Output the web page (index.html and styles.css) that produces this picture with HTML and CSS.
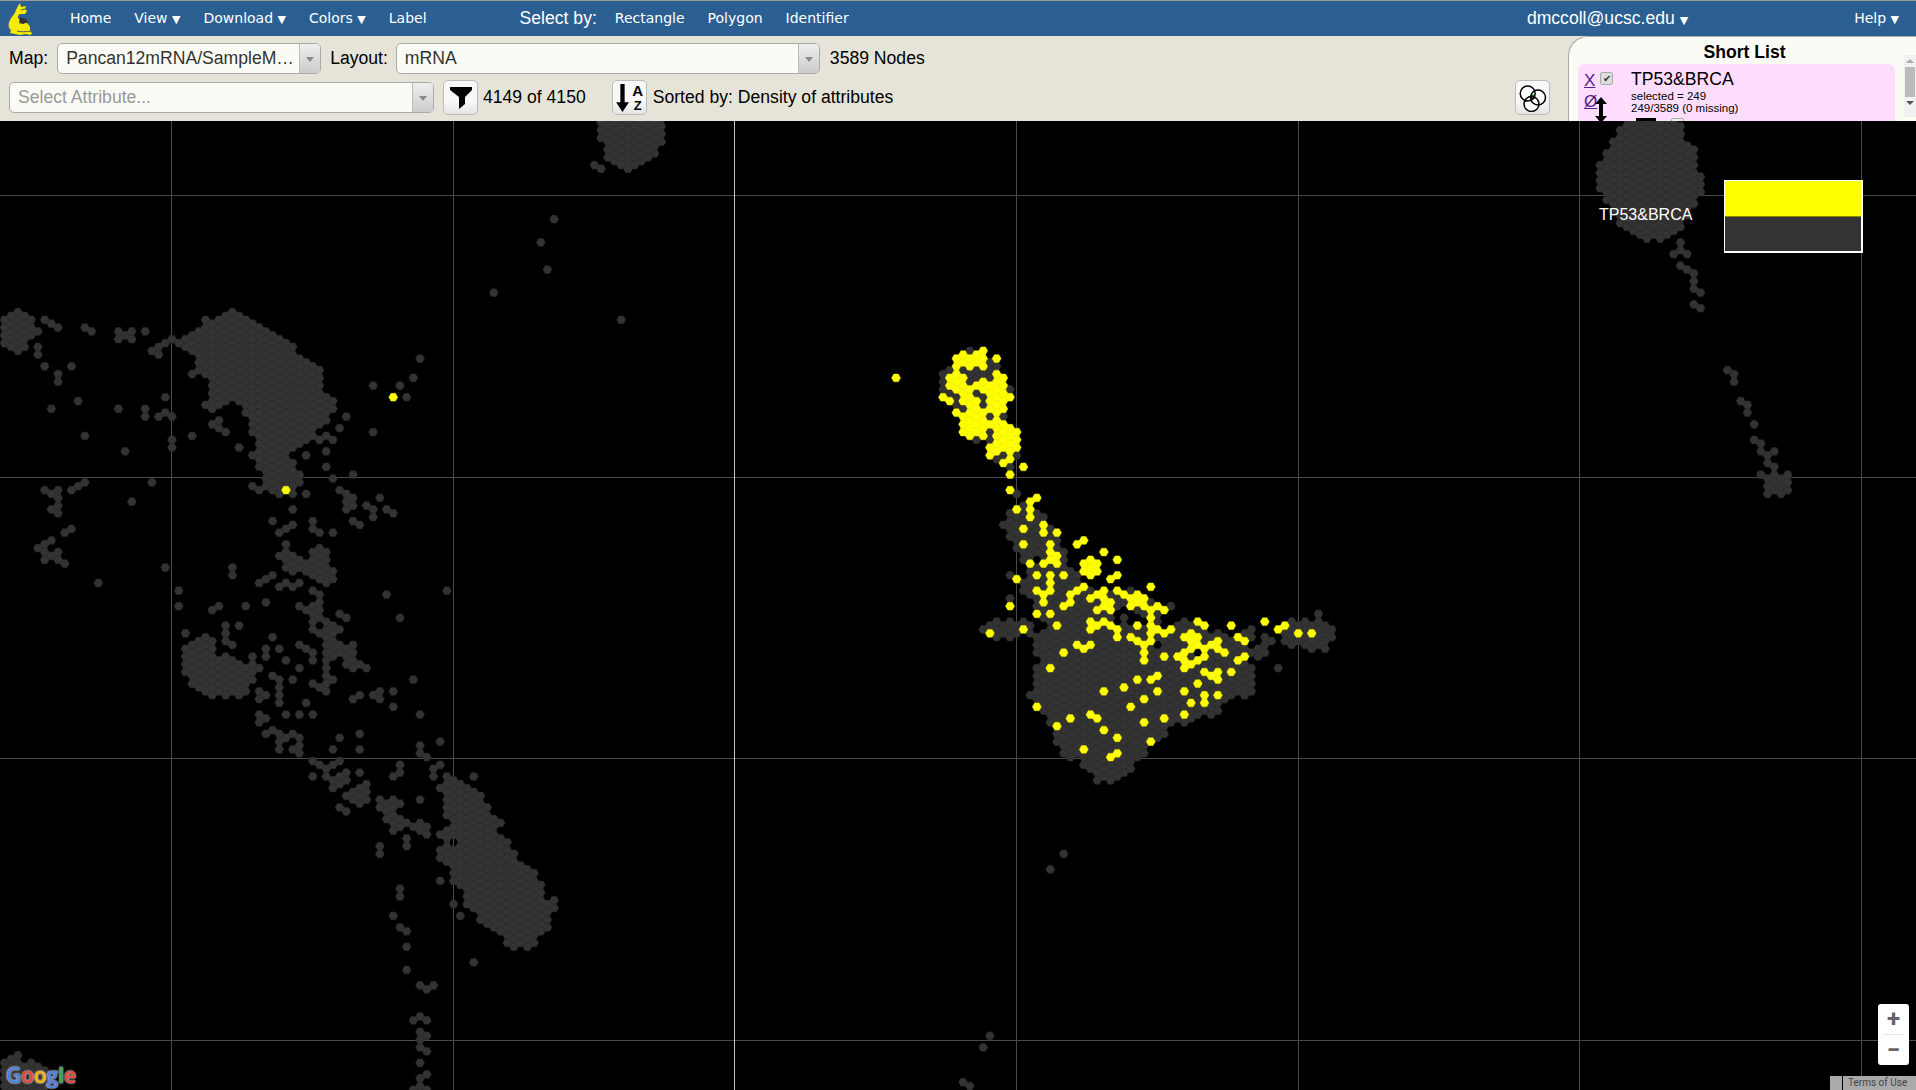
FILE: index.html
```html
<!DOCTYPE html>
<html lang="en">
<head>
  <meta charset="UTF-8">
  <title>Tumor Map</title>
  <link rel="stylesheet" href="styles.css">
</head>
<body>
  <header class="nav">
    <svg class="logo" viewBox="0 0 28 34" width="28" height="34">
      <path d="M12 1l1 4 5-1-1 3 2 2-2 3-5 0c-2 1-3 3-1 5l5 3c4 1 7 4 6 8l2 4-2 1-4-1-6 1-5-1-5-1 1-3c-3-2-3-6-1-10 2-4 5-6 6-10l2-4z" fill="#f5ea00"/>
      <path d="M12 15l6 2 2 3-5 2-4-1z" fill="#333"/>
      <path d="M13 8l4-1M9 29c4 1 9 1 14 0" stroke="#555" stroke-width="1" fill="none"/>
    </svg>
    <a class="nav-item first">Home</a>
    <a class="nav-item">View <i>▼</i></a>
    <a class="nav-item">Download <i>▼</i></a>
    <a class="nav-item">Colors <i>▼</i></a>
    <a class="nav-item">Label</a>
    <span class="select-by">Select by:</span>
    <a class="nav-item">Rectangle</a>
    <a class="nav-item">Polygon</a>
    <a class="nav-item">Identifier</a>
    <span class="user">dmccoll@ucsc.edu <i>▼</i></span>
    <a class="nav-item help">Help <i>▼</i></a>
  </header>

  <section class="toolbar">
    <div class="controls">
      <div class="row">
        <span class="label">Map:</span>
        <div class="combo map-combo"><span class="combo-text">Pancan12mRNA/SampleM…</span><span class="combo-arrow"></span></div>
        <span class="label">Layout:</span>
        <div class="combo layout-combo"><span class="combo-text">mRNA</span><span class="combo-arrow"></span></div>
        <span class="label">3589 Nodes</span>
      </div>
      <div class="row row-two">
        <div class="combo attr-combo"><span class="combo-text placeholder">Select Attribute...</span><span class="combo-arrow"></span></div>
        <button class="icon-button">
          <svg viewBox="0 0 24 24" width="24" height="24"><path d="M1 1h22v3l-7 7v7l-6 5V11L1 4z" fill="#000"/></svg>
        </button>
        <span class="label count">4149 of 4150</span>
        <button class="icon-button sort-button">
          <svg viewBox="0 0 14 28" width="15" height="30"><path d="M5 1h4v17h4l-6 9-6-9h4z" fill="#000"/></svg>
          <span class="az"><b>A</b><b class="az-small">Z</b></span>
        </button>
        <span class="label sorted">Sorted by: Density of attributes</span>
        <button class="icon-button venn-button">
          <svg viewBox="0 0 28 28" width="28" height="28">
            <g fill="#fff">
              <circle cx="8.7" cy="9.5" r="7.5"/>
              <circle cx="19" cy="13.5" r="7.5"/>
              <circle cx="12.5" cy="20" r="7.5"/>
            </g>
            <circle cx="13.5" cy="13" r="2.6" fill="#0a7a0a"/>
            <g fill="none" stroke="#000" stroke-width="1.5">
              <circle cx="8.7" cy="9.5" r="7.5"/>
              <circle cx="19" cy="13.5" r="7.5"/>
              <circle cx="12.5" cy="20" r="7.5"/>
            </g>
          </svg>
        </button>
      </div>
    </div>
    <aside class="short-list">
      <h2>Short List</h2>
      <div class="card">
        <div class="card-tools">
          <a class="card-link">X</a><span class="check">✔</span>
          <a class="card-link">Ø</a>
          <svg class="move" viewBox="0 0 14 26" width="14" height="26"><path d="M7 0l6 7H9v12h4l-6 7-6-7h4V7H1z" fill="#000"/></svg>
        </div>
        <div class="card-info">
          <div class="card-name">TP53&amp;BRCA</div>
          <div class="card-stat">selected = 249</div>
          <div class="card-stat">249/3589 (0 missing)</div>
          <div class="card-more"><span class="more-bar"></span><span class="more-box"></span></div>
        </div>
      </div>
      <div class="scrollbar"><span class="up"></span><span class="thumb"></span><span class="down"></span></div>
    </aside>
  </section>

  <main class="map">
    <svg id="hexes" class="hexes" viewBox="0 121 1916 969"></svg>
    <div class="legend-label">TP53&amp;BRCA</div>
    <div class="legend"><div class="legend-on"></div><div class="legend-off"></div></div>
    <div class="google"><span class="g-blue">G</span><span class="g-red">o</span><span class="g-yellow">o</span><span class="g-blue">g</span><span class="g-green">l</span><span class="g-red">e</span></div>
    <div class="zoom"><span class="zoom-btn">+</span><span class="zoom-sep"></span><span class="zoom-btn">−</span></div>
    <div class="terms"><span class="terms-box"></span><span class="terms-text">Terms of Use</span></div>
  </main>

  <script src="app.js"></script>
</body>
</html>
```

FILE: styles.css
```css
html, body {
  margin: 0;
  padding: 0;
  height: 100%;
  overflow: hidden;
}

body {
  display: flex;
  flex-direction: column;
  font-family: "Liberation Sans", Arial, sans-serif;
  font-size: 17.6px;
  color: #000;
  background: #000;
}

.nav {
  display: flex;
  align-items: center;
  flex: 0 0 35px;
  border-top: 1px solid #999;
  background: #2c5f91;
  color: #fff;
  padding-left: 8px;
}

.logo {
  flex: none;
}

.nav-item {
  font-family: "DejaVu Sans", sans-serif;
  font-size: 14px;
  margin-right: 23px;
  white-space: nowrap;
  position: relative;
  top: -1px;
}

.nav-item i, .user i {
  font-style: normal;
  font-size: 11px;
  font-family: "DejaVu Sans", sans-serif;
}

.first {
  margin-left: 34px;
}

.select-by {
  margin-left: 70px;
  margin-right: 18px;
  white-space: nowrap;
}

.user {
  margin-left: auto;
  white-space: nowrap;
}

.help {
  margin-left: 166px;
  margin-right: 17px;
}

.toolbar {
  display: flex;
  flex: 0 0 85px;
  background: #e6e4d8;
  overflow: hidden;
}

.controls {
  flex: 1;
  min-width: 0;
  padding: 7px 18px 0 9px;
}

.row {
  display: flex;
  align-items: center;
  height: 31px;
}

.row-two {
  height: 35px;
  margin-top: 6px;
}

.label {
  white-space: nowrap;
}

.combo {
  display: flex;
  height: 31px;
  box-sizing: border-box;
  border: 1px solid #aaa;
  border-radius: 5px;
  background: #fbfbf5;
  overflow: hidden;
}

.combo-text {
  flex: 1;
  padding-left: 8px;
  line-height: 29px;
  color: #333;
  white-space: nowrap;
  overflow: hidden;
}

.placeholder {
  color: #999;
}

.combo-arrow {
  flex: 0 0 20px;
  border-left: 1px solid #bbb;
  background: linear-gradient(#eee, #ccc);
  position: relative;
}

.combo-arrow::after {
  content: "";
  position: absolute;
  left: 6px;
  top: 13px;
  border: 4px solid transparent;
  border-top: 5px solid #888;
}

.map-combo {
  width: 264px;
  margin: 0 9px;
}

.layout-combo {
  width: 424px;
  margin: 0 10px 0 8px;
}

.attr-combo {
  width: 425px;
}

.icon-button {
  display: flex;
  align-items: center;
  justify-content: center;
  flex: none;
  width: 35px;
  height: 35px;
  padding: 0;
  border: 1px solid #bbb;
  border-radius: 5px;
  background: linear-gradient(#f8f8f8 60%, #e4e4e4);
}

.attr-combo + .icon-button {
  margin-left: 9px;
}

.count {
  margin-left: 5px;
}

.sort-button {
  margin-left: 26px;
  gap: 2px;
  font-family: "Liberation Sans", sans-serif;
  color: #000;
}

.az {
  display: flex;
  flex-direction: column;
  align-items: center;
  font-size: 15px;
  line-height: 15px;
}

.az-small {
  font-size: 13px;
}

.sorted {
  margin-left: 6px;
}

.venn-button {
  margin-left: auto;
}

.short-list {
  position: relative;
  flex: 0 0 348px;
  min-width: 0;
  box-sizing: border-box;
  border: 1px solid #aaa;
  border-right: 0;
  border-radius: 20px 0 0 20px;
  background: #fbfbf5;
  height: 110px;
}

.short-list h2 {
  margin: 0;
  padding: 5px 0 0 0;
  width: 351px;
  text-align: center;
  font-size: 17.6px;
  line-height: 20px;
}

.card {
  display: flex;
  margin: 2px 0 0 9px;
  width: 317px;
  height: 76px;
  border-radius: 7px;
  background: #fdf;
}

.card-tools {
  position: relative;
  flex: 0 0 53px;
}

.card-link {
  position: absolute;
  left: 6px;
  top: 7px;
  color: #551a8b;
  text-decoration: underline;
  font-size: 17px;
}

.card-link:nth-of-type(2) {
  top: 28px;
}

.check {
  position: absolute;
  left: 22px;
  top: 8px;
  width: 11px;
  height: 11px;
  border: 1px solid #aaa;
  border-radius: 2px;
  background: #dcdcdc;
  color: #333;
  font-size: 10px;
  line-height: 11px;
  text-align: center;
}

.move {
  position: absolute;
  left: 16px;
  top: 33px;
}

.card-info {
  padding-top: 5px;
}

.card-name {
  font-size: 17.6px;
  line-height: 20px;
}

.card-stat {
  font-size: 11.5px;
  line-height: 12px;
}

.card-stat:nth-child(2) {
  margin-top: 1px;
}

.card-more {
  display: flex;
  gap: 15px;
  margin-top: 4px;
}

.more-bar {
  margin-left: 5px;
  width: 20px;
  height: 3px;
  background: #000;
}

.more-box {
  width: 11px;
  height: 11px;
  border: 1px solid #aaa;
  border-radius: 2px;
  background: #eee;
}

.scrollbar {
  position: absolute;
  right: 0;
  top: 18px;
  width: 12px;
  height: 62px;
  display: flex;
  flex-direction: column;
  align-items: center;
  background: #f1f1f1;
}

.scrollbar .up, .scrollbar .down {
  flex: 0 0 12px;
  position: relative;
}

.scrollbar .up::after, .scrollbar .down::after {
  content: "";
  position: absolute;
  left: -4px;
  border: 4px solid transparent;
}

.scrollbar .up::after {
  top: 0;
  border-bottom: 4px solid #aaa;
}

.scrollbar .down::after {
  top: 4px;
  border-top: 4px solid #555;
}

.scrollbar .thumb {
  flex: 0 0 30px;
  width: 10px;
  background: #bbb;
}

.map {
  position: relative;
  flex: 1;
  background: #000;
  overflow: hidden;
}

.hexes {
  display: block;
  width: 100%;
  height: 100%;
}

.legend-label {
  position: absolute;
  left: 1599px;
  top: 85px;
  color: #fff;
  font-size: 16px;
}

.legend {
  position: absolute;
  left: 1724px;
  top: 59px;
  width: 136px;
  height: 70px;
  border: 2px solid #fff;
  border-width: 1px 2px 2px 1px;
  display: flex;
  flex-direction: column;
}

.legend-on {
  flex: 1;
  background: #ff0;
  border-bottom: 1px solid #888800;
}

.legend-off {
  flex: 1;
  background: #333;
}

.google {
  position: absolute;
  left: 6px;
  top: 942px;
  font-family: "Open Sans", sans-serif;
  font-size: 21px;
  font-weight: 600;
  line-height: 25px;
  letter-spacing: -0.1px;
  text-shadow: 0 0 2px #aaa, 0 0 2px #aaa, 0 0 2px #aaa;
}

.g-blue { color: #4d80e4; }
.g-red { color: #e84335; }
.g-yellow { color: #f5b800; }
.g-green { color: #34a853; }

.zoom {
  position: absolute;
  left: 1878px;
  top: 883px;
  width: 31px;
  height: 61px;
  border-radius: 3px;
  background: #fff;
  display: flex;
  flex-direction: column;
  align-items: center;
}

.zoom-btn {
  flex: 1;
  color: #666;
  font-family: "Roboto", sans-serif;
  font-size: 24px;
  font-weight: 700;
  line-height: 30px;
}

.zoom-sep {
  flex: 0 0 1px;
  width: 21px;
  background: #e6e6e6;
}

.terms {
  position: absolute;
  right: 0;
  bottom: 0;
  display: flex;
  gap: 1px;
  height: 14px;
  font-family: "Roboto", sans-serif;
  font-size: 10px;
  line-height: 14px;
  color: #444;
}

.terms-box {
  width: 12px;
  background: #aaa;
}

.terms-text {
  width: 73px;
  padding-left: 5px;
  box-sizing: border-box;
  background: #aaa;
  white-space: nowrap;
  overflow: hidden;
}
```

FILE: app.js
```js
// hex grid, page coordinates
const DX = 6.704;
const DY = 7.74;
const R = 4.47;
const X0 = 1298.3;
const Y0 = 633.3;

const cells = new Map();

function isOdd(col) {
  return Math.abs(col) % 2 === 1;
}

function center(col, row) {
  return [X0 + col * DX, Y0 + row * DY + (isOdd(col) ? DY / 2 : 0)];
}

function setCell(x, y, color) {
  const col = Math.round((x - X0) / DX);
  const row = Math.round((y - Y0 - (isOdd(col) ? DY / 2 : 0)) / DY);
  cells.set(col + "," + row, color);
}

// the lists below were read off 3x crops, so each has its crop origin
function toPage(origin, list) {
  return list.map(p => [origin[0] + p[0] / 3, origin[1] + p[1] / 3]);
}

function inside(poly, x, y) {
  let hit = false;
  for (let i = 0, j = poly.length - 1; i < poly.length; j = i++) {
    const a = poly[i];
    const b = poly[j];
    if ((a[1] > y) !== (b[1] > y) && x < (b[0] - a[0]) * (y - a[1]) / (b[1] - a[1]) + a[0]) {
      hit = !hit;
    }
  }
  return hit;
}

function fillBlob(origin, list, color) {
  const poly = toPage(origin, list);
  const xs = poly.map(p => p[0]);
  const ys = poly.map(p => p[1]);
  const minCol = Math.floor((Math.min(...xs) - X0) / DX) - 1;
  const maxCol = Math.ceil((Math.max(...xs) - X0) / DX) + 1;
  const minRow = Math.floor((Math.min(...ys) - Y0) / DY) - 1;
  const maxRow = Math.ceil((Math.max(...ys) - Y0) / DY) + 1;
  for (let col = minCol; col <= maxCol; col++) {
    for (let row = minRow; row <= maxRow; row++) {
      const c = center(col, row);
      if (inside(poly, c[0], c[1])) {
        if (color) cells.set(col + "," + row, color);
        else cells.delete(col + "," + row);
      }
    }
  }
}

function addPoints(origin, list, color) {
  toPage(origin, list).forEach(p => setCell(p[0], p[1], color));
}

function removePoints(origin, list) {
  toPage(origin, list).forEach(p => {
    const col = Math.round((p[0] - X0) / DX);
    const row = Math.round((p[1] - Y0 - (isOdd(col) ? DY / 2 : 0)) / DY);
    cells.delete(col + "," + row);
  });
}

const GREY = "#333333";
const YELLOW = "#ffff00";

// top left
const A = [0, 290];
fillBlob(A, [[530,155],[600,110],[615,88],[655,85],[695,62],[770,88],[815,130],[860,155],[885,175],[900,205],[960,235],[970,290],[1005,330],[1005,360],[975,410],[905,465],[880,480],[850,490],[885,525],[905,555],[900,580],[875,615],[835,620],[790,590],[785,545],[770,520],[755,495],[765,460],[745,430],[745,400],[725,355],[695,335],[640,365],[605,345],[630,330],[625,280],[590,235],[585,205],[530,160]], GREY);
fillBlob(A, [[-5,70],[50,60],[100,90],[120,125],[80,170],[50,190],[-5,160]], GREY);
addPoints(A, [[133,89],[152,102],[172,113],[253,112],[274,126],[353,126],[353,150],[373,138],[393,126],[393,150],[435,126],[456,182],[476,160],[476,196],[495,160],[514,149],[112,172],[112,195],[133,229],[215,229],[172,250],[172,274],[573,251],[235,335],[152,358],[353,358],[435,358],[435,381],[495,325],[476,381],[495,370],[514,381],[613,347],[655,392],[635,404],[655,416],[676,428],[255,440],[514,451],[514,474],[573,440],[373,487],[715,474],[1038,381],[1017,417],[958,451],[977,440],[997,451],[977,487],[918,497],[977,533],[997,565],[1060,555],[1017,601],[1038,613],[1060,625],[1038,637],[1060,648],[1038,660],[1119,289],[1119,428],[1199,289],[1239,265],[1260,207],[1218,325],[918,614],[878,614],[755,590],[775,601],[878,660],[815,694],[878,706],[857,717],[835,730],[937,694],[937,717],[958,730],[997,730],[1100,648],[1119,660],[1119,684],[1140,625],[1160,660],[1180,671],[1060,694],[1080,706],[857,765],[695,832],[695,855],[815,855],[795,867],[775,879],[495,832],[294,879],[133,601],[152,613],[172,601],[172,625],[172,648],[152,660],[172,672],[215,601],[235,589],[255,577],[456,577],[393,637],[215,717],[194,730],[152,752],[133,764],[112,775],[133,787],[133,810],[152,799],[172,787],[172,810],[194,822]], GREY);

// middle left
const B = [150, 540];
fillBlob(B, [[378,48],[405,28],[440,50],[470,65],[480,30],[510,15],[540,40],[538,85],[560,100],[555,125],[515,140],[475,110],[430,100],[400,80]], GREY);
fillBlob(B, [[470,205],[510,180],[530,225],[555,250],[575,270],[560,290],[610,315],[620,330],[605,350],[550,350],[530,365],[510,350],[518,315],[520,285],[480,270],[485,240]], GREY);
fillBlob(B, [[92,340],[103,320],[160,285],[205,310],[205,340],[225,345],[250,350],[270,375],[330,365],[345,390],[305,425],[295,455],[260,475],[185,475],[130,445],[95,400]], GREY);
fillBlob(B, [[575,768],[630,730],[660,730],[660,785],[630,800],[600,780]], GREY);
fillBlob(B, [[680,775],[730,770],[760,790],[735,815],[765,820],[780,850],[810,840],[850,850],[830,885],[790,865],[750,865],[730,875],[715,845],[690,810]], GREY);
fillBlob(B, [[880,705],[905,700],[940,735],[965,745],[1000,770],[1020,800],[1055,850],[1040,870],[1080,905],[1100,940],[1115,970],[1160,995],[1180,1030],[1185,1080],[1220,1080],[1220,1105],[1195,1140],[1200,1165],[1165,1190],[1150,1225],[1085,1225],[1000,1150],[945,1090],[935,1060],[905,1030],[900,975],[860,950],[880,900],[860,880],[900,860],[880,830],[880,760],[860,745]], GREY);
removePoints(B, [[507,256],[225,325],[910,905]]);
addPoints(B, [[407,13],[487,153],[507,165],[345,187],[365,105],[345,116],[324,128],[407,125],[387,141],[428,141],[448,128],[84,153],[46,82],[246,82],[246,105],[84,200],[206,200],[186,212],[286,200],[709,165],[891,153],[750,234],[447,200],[467,212],[567,222],[590,234],[447,316],[467,328],[487,340],[487,364],[407,362],[447,385],[610,340],[610,362],[587,372],[610,385],[630,374],[650,385],[528,385],[528,405],[548,420],[528,430],[507,440],[487,430],[528,455],[428,420],[789,420],[345,325],[345,350],[305,350],[365,293],[387,326],[225,257],[265,257],[225,280],[103,280],[225,303],[246,316],[365,408],[387,420],[387,442],[387,465],[387,490],[324,454],[324,478],[345,466],[467,490],[407,524],[447,524],[487,524],[324,522],[345,535],[324,547],[365,570],[345,582],[387,582],[407,593],[428,582],[448,593],[387,605],[387,630],[428,630],[448,617],[448,640],[567,593],[630,582],[547,630],[630,630],[630,698],[487,660],[507,672],[528,685],[548,672],[567,660],[487,708],[528,708],[548,720],[567,708],[587,696],[587,720],[567,730],[548,745],[610,466],[630,466],[670,466],[690,454],[690,478],[729,454],[729,500],[810,524],[809,617],[809,640],[830,652],[871,605],[871,675],[851,686],[851,708],[969,708],[750,675],[750,697],[729,708],[567,802],[590,814],[810,780],[768,895],[768,920],[689,918],[689,942],[750,1045],[750,1070],[729,1128],[750,1163],[769,1175],[872,1022],[910,1095],[930,1128]], GREY);

// bottom left
addPoints([300, 880], [[299,25],[299,50],[280,107],[299,143],[319,155],[319,201],[319,271],[360,317],[381,329],[401,317],[339,423],[360,411],[381,423],[360,458],[381,469],[360,481],[360,505],[381,514],[360,549],[381,583],[360,596],[339,627],[360,615],[381,627],[460,73],[480,107],[518,247]], GREY);
fillBlob([0, 1040], [[-5,75],[50,35],[65,60],[95,60],[140,85],[140,155],[-5,155]], GREY);

// top centre
const C = [440, 120];
fillBlob(C, [[470,-10],[675,-10],[675,50],[655,100],[620,120],[565,160],[520,130],[490,105],[490,70],[470,50]], GREY);
addPoints(C, [[461,134],[482,148],[340,297],[300,367],[320,447],[162,519],[541,599]], GREY);

// top right
const D = [1590, 120];
fillBlob(D, [[80,30],[100,-5],[240,-5],[270,10],[280,50],[300,70],[320,100],[320,150],[345,170],[340,205],[320,235],[300,275],[270,325],[215,360],[165,365],[90,310],[60,260],[35,220],[15,180],[15,155],[40,120],[60,60]], GREY);
fillBlob(D, [[525,1070],[600,1060],[605,1115],[575,1135],[525,1130],[525,1090]], GREY);
addPoints(D, [[269,18],[269,367],[249,401],[269,390],[290,401],[269,436],[290,448],[312,460],[312,483],[312,507],[333,519],[312,553],[333,566],[411,751],[431,762],[431,786],[451,845],[471,857],[471,881],[491,915],[491,961],[514,973],[514,996],[534,1008],[554,996],[534,1031],[554,1043],[554,1066],[514,1066]], GREY);

// main cluster
const E = [960, 500];
const F = [880, 330];
fillBlob(E, [[125,75],[150,30],[230,30],[255,50],[260,90],[300,120],[320,150],[325,210],[350,220],[380,260],[420,265],[490,270],[520,265],[560,300],[630,320],[590,350],[620,390],[660,360],[710,360],[750,390],[800,410],[840,400],[880,390],[870,460],[850,490],[885,510],[885,580],[855,595],[820,590],[780,620],[770,640],[680,670],[640,680],[610,710],[570,735],[560,760],[520,800],[500,820],[450,850],[410,850],[370,800],[360,775],[325,780],[285,730],[280,690],[260,665],[225,620],[200,585],[225,545],[220,510],[240,480],[215,450],[225,425],[190,400],[160,420],[110,420],[60,390],[110,358],[190,358],[210,375],[230,395],[260,390],[245,365],[215,320],[225,300],[180,270],[180,250],[200,220],[180,180],[165,160],[160,125],[140,110]], GREY);
fillBlob(F, [[360,590],[385,545],[425,515],[470,545],[500,565],[530,600]], GREY);
fillBlob(E, [[465,330],[515,330],[555,350],[550,395],[520,392],[500,372],[470,372]], null);
removePoints(E, [[228,178],[712,458],[592,437]]);
addPoints(E, [[490,352],[875,390],[875,413],[915,410],[935,423],[895,435],[915,435],[875,458],[895,458],[915,458],[957,505],[632,320],[151,297],[150,225]], GREY);
fillBlob(E, [[965,420],[990,365],[1035,355],[1070,360],[1075,340],[1100,375],[1145,378],[1125,415],[1105,450],[1040,465],[1040,435],[1000,445]], GREY);

// yellow head of the main cluster
fillBlob(F, [[215,85],[250,65],[325,55],[325,110],[345,125],[385,145],[385,180],[403,205],[385,215],[385,250],[365,270],[390,290],[420,305],[420,360],[400,370],[345,385],[320,385],[318,345],[300,335],[240,320],[235,265],[215,260],[200,170],[200,135],[240,125],[215,110]], YELLOW);
addPoints(F, [[350,85],[190,205],[208,215],[229,251],[47,145],[428,413],[391,435],[391,482],[371,400],[391,390],[331,378],[309,320],[468,504],[448,517],[409,540],[448,540],[448,563],[488,586],[428,592]], YELLOW);
addPoints(F, [[269,62],[330,100],[350,108],[249,122],[269,133],[289,122],[309,133],[330,122],[330,145],[269,156],[289,133],[190,133],[210,122],[190,156],[190,180],[210,192],[230,205],[230,228],[249,238],[289,192],[309,205],[309,228],[332,262],[372,262],[391,180],[289,331],[332,308],[332,331],[372,378],[351,390],[411,378],[391,413],[409,495]], GREY);

addPoints(E, [[169,30],[208,7],[208,30],[208,53],[248,76],[189,87],[248,99],[291,100],[189,133],[269,133],[350,133],[371,122],[430,156],[269,156],[269,180],[291,168],[291,191],[248,191],[208,191],[470,179],[390,179],[370,191],[410,191],[370,214],[390,203],[410,214],[390,226],[228,226],[269,226],[311,226],[470,226],[450,238],[169,238],[269,249],[269,272],[248,284],[228,272],[371,261],[350,272],[330,284],[330,307],[311,321],[248,308],[150,321],[228,344],[269,344],[291,377],[189,390],[91,400],[573,261],[430,272],[470,272],[410,284],[390,296],[430,296],[430,318],[450,307],[490,284],[450,330],[410,330],[513,296],[533,284],[553,296],[533,307],[513,321],[553,321],[573,330],[592,320],[613,330],[573,354],[573,377],[573,400],[592,390],[613,400],[632,390],[573,423],[553,435],[533,423],[513,412],[553,458],[553,482],[533,377],[390,365],[410,377],[430,365],[450,377],[470,390],[470,412],[390,390],[350,435],[371,447],[391,435],[311,459],[613,469],[270,505],[715,366],[735,377],[692,400],[715,400],[672,412],[692,423],[715,423],[692,447],[715,435],[735,447],[755,435],[775,423],[775,447],[795,459],[672,459],[652,469],[672,482],[692,493],[715,482],[735,469],[672,505],[815,377],[835,412],[855,423],[855,469],[835,482],[815,516],[735,516],[755,528],[775,516],[775,540],[715,552],[735,587],[775,587],[735,611],[692,611],[672,574],[672,645],[915,366],[957,390],[977,377],[1015,400],[1054,400],[592,527],[573,540],[533,540],[490,562],[430,574],[592,574],[553,598],[513,621],[228,621],[391,645],[410,657],[331,657],[291,680],[430,690],[553,667],[613,657],[470,714],[573,727],[371,750],[470,760],[450,772]], YELLOW);

// top left strays and the ones near the bottom edge
addPoints([0, 290], [[858,600],[1179,324]], YELLOW);
addPoints([0, 0], [[1050,869],[1063,853],[990,1036],[985,1051],[971,1085],[965,1085]].map(p => [p[0] * 3, p[1] * 3]), GREY);

const NS = "http://www.w3.org/2000/svg";
const svg = document.getElementById("hexes");

function addLine(x1, y1, x2, y2, color) {
  const line = document.createElementNS(NS, "line");
  line.setAttribute("x1", x1);
  line.setAttribute("y1", y1);
  line.setAttribute("x2", x2);
  line.setAttribute("y2", y2);
  line.setAttribute("stroke", color);
  svg.appendChild(line);
}

[195.5, 477.5, 758.5, 1040.5].forEach(y => addLine(0, y, 1916, y, "#4a4a4a"));
[171.5, 453.5, 1016.5, 1298.5, 1579.5, 1861.5].forEach(x => addLine(x, 121, x, 1090, "#4a4a4a"));
addLine(734.5, 121, 734.5, 1090, "#c4c4c4");

function hexPath(c) {
  const h = R * Math.sqrt(3) / 2;
  const x = c[0];
  const y = c[1];
  return "M" + (x - R).toFixed(2) + " " + y.toFixed(2) +
    "L" + (x - R / 2).toFixed(2) + " " + (y - h).toFixed(2) +
    "L" + (x + R / 2).toFixed(2) + " " + (y - h).toFixed(2) +
    "L" + (x + R).toFixed(2) + " " + y.toFixed(2) +
    "L" + (x + R / 2).toFixed(2) + " " + (y + h).toFixed(2) +
    "L" + (x - R / 2).toFixed(2) + " " + (y + h).toFixed(2) + "Z";
}

function drawCells(color, edge) {
  let d = "";
  cells.forEach((value, key) => {
    if (value !== color) return;
    const parts = key.split(",");
    d += hexPath(center(Number(parts[0]), Number(parts[1])));
  });
  const path = document.createElementNS(NS, "path");
  path.setAttribute("d", d);
  path.setAttribute("fill", color);
  path.setAttribute("stroke", edge);
  path.setAttribute("stroke-width", "0.5");
  svg.appendChild(path);
}

drawCells(GREY, "#2d2d2d");
drawCells(YELLOW, "#eeee00");
```
